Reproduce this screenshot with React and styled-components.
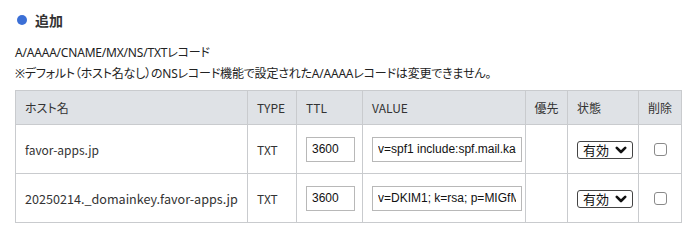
import React from 'react';
import styled, { createGlobalStyle } from 'styled-components';

const Global = createGlobalStyle`
  body {
    margin: 0;
    background: #fff;
    font-family: "Noto Sans CJK JP", "Noto Sans", sans-serif;
    color: #333;
  }
`;

const Page = styled.div`
  padding: 8px 15px 0 15px;
`;

const Heading = styled.h3`
  display: flex;
  align-items: center;
  gap: 8px;
  margin: 0 0 10px 2px;
  font-size: 14px;
  font-weight: bold;
  color: #333;
  line-height: 24px;
  &::before {
    content: '';
    width: 10px;
    height: 10px;
    border-radius: 50%;
    background: #3b6fd6;
  }
`;

const Note = styled.p`
  margin: 0;
  font-family: "Noto Sans", "Noto Sans CJK JP", sans-serif;
  font-size: 12px;
  line-height: 21px;
  color: #222;
  white-space: nowrap;
  font-feature-settings: "palt";
  letter-spacing: -0.2px;
`;

const Table = styled.table`
  margin-top: 6px;
  border-collapse: collapse;
  table-layout: fixed;
  width: 666px;
  font-size: 12px;
`;

const Th = styled.th`
  background: #dfe2e6;
  border: 1px solid #c9cbce;
  height: 33px;
  padding: 0 ${p => p.$pad || 9}px;
  font-weight: normal;
  text-align: ${p => p.$align || 'left'};
  color: #333;
  white-space: nowrap;
  font-feature-settings: "palt";
`;

const Td = styled.td`
  border: 1px solid #c9cbce;
  height: 48px;
  padding: 0 9px;
  font-size: ${p => p.$big ? '12.6px' : '12px'};
  text-align: ${p => p.$align || 'left'};
  color: #333;
  white-space: nowrap;
`;

const TextInput = styled.input`
  box-sizing: border-box;
  width: ${p => p.$w}px;
  height: 25px;
  border: 1px solid #b8b8b8;
  padding: 0 5px;
  font-family: "Liberation Sans", Arial, sans-serif;
  font-size: 12px;
  color: #111;
  background: #fff;
  outline: none;
`;

const SelectWrap = styled.span`
  position: relative;
  display: inline-block;
  vertical-align: middle;
`;

const Select = styled.select`
  appearance: none;
  box-sizing: border-box;
  width: 56px;
  height: 18px;
  padding: 0 0 0 5px;
  font-family: "Noto Sans CJK JP", sans-serif;
  font-size: 13px;
  line-height: 16px;
  border: 1px solid #444;
  border-radius: 3px;
  background: #fff;
  color: #111;
  display: block;
`;

const Chevron = styled.svg`
  position: absolute;
  right: 6px;
  top: 5px;
  pointer-events: none;
`;

const Check = styled.input`
  appearance: none;
  display: block;
  margin: 0 auto;
  width: 13px;
  height: 13px;
  border: 1px solid #8a8a8a;
  border-radius: 3px;
  background: #fff;
`;

const cols = [232, 49, 66, 163, 42, 71, 43];

const records = [
  { host: 'favor-apps.jp', type: 'TXT', ttl: '3600', value: 'v=spf1 include:spf.mail.kagoya.net ~all', big: false },
  { host: '20250214._domainkey.favor-apps.jp', type: 'TXT', ttl: '3600', value: 'v=DKIM1; k=rsa; p=MIGfMA0GCSqGSIb3DQEBAQUAA4', big: true },
];

export default function App() {
  return (
    <Page>
      <Global />
      <Heading>追加</Heading>
      <Note>A/AAAA/CNAME/MX/NS/TXTレコード</Note>
      <Note>※デフォルト（ホスト名なし）のNSレコード機能で設定されたA/AAAAレコードは変更できません。</Note>
      <Table>
        <colgroup>
          {cols.map((w, i) => <col key={i} style={{ width: w }} />)}
        </colgroup>
        <thead>
          <tr>
            <Th>ホスト名</Th>
            <Th>TYPE</Th>
            <Th>TTL</Th>
            <Th>VALUE</Th>
            <Th $align="center" $pad={4}>優先</Th>
            <Th>状態</Th>
            <Th $align="center" $pad={4}>削除</Th>
          </tr>
        </thead>
        <tbody>
          {records.map(r => (
            <tr key={r.host}>
              <Td $big={r.big}>{r.host}</Td>
              <Td>{r.type}</Td>
              <Td><TextInput $w={49} defaultValue={r.ttl} /></Td>
              <Td><TextInput $w={150} defaultValue={r.value} /></Td>
              <Td />
              <Td $align="center">
                <SelectWrap>
                  <Select defaultValue="1">
                    <option value="1">有効</option>
                    <option value="0">無効</option>
                  </Select>
                  <Chevron width="12" height="8" viewBox="0 0 12 8">
                    <path d="M1.8 1.8 L6 6 L10.2 1.8" fill="none" stroke="#111" strokeWidth="2.6" strokeLinecap="round" strokeLinejoin="round" />
                  </Chevron>
                </SelectWrap>
              </Td>
              <Td $align="center"><Check type="checkbox" /></Td>
            </tr>
          ))}
        </tbody>
      </Table>
    </Page>
  );
}
